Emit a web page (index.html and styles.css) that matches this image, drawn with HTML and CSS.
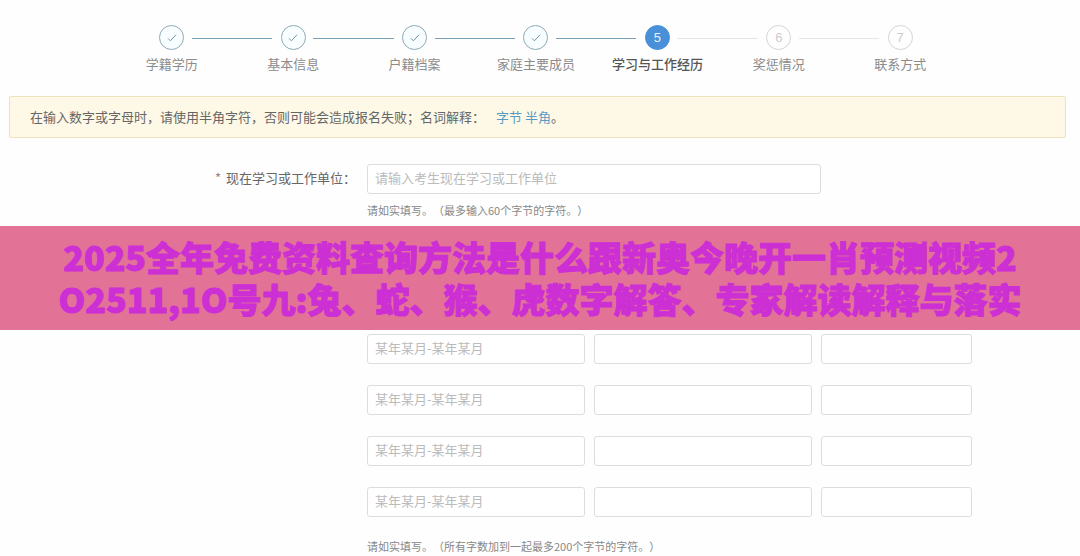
FILE: index.html
```html
<!DOCTYPE html>
<html lang="zh-CN">
<head>
    <meta charset="UTF-8">
    <meta name="viewport" content="width=device-width, initial-scale=1.0">
    <title>学习与工作经历</title>
    <link rel="stylesheet" href="styles.css">
</head>
<body>
    <div class="section">
        <ol class="steps">
            <li class="step done">
                <span class="circle"><svg viewBox="0 0 12 10" width="10" height="8"><path d="M1 5.5 L4 8.5 L11 1"/></svg></span>
                <span class="step-name">学籍学历</span>
            </li>
            <li class="step done">
                <span class="circle"><svg viewBox="0 0 12 10" width="10" height="8"><path d="M1 5.5 L4 8.5 L11 1"/></svg></span>
                <span class="step-name">基本信息</span>
            </li>
            <li class="step done">
                <span class="circle"><svg viewBox="0 0 12 10" width="10" height="8"><path d="M1 5.5 L4 8.5 L11 1"/></svg></span>
                <span class="step-name">户籍档案</span>
            </li>
            <li class="step done">
                <span class="circle"><svg viewBox="0 0 12 10" width="10" height="8"><path d="M1 5.5 L4 8.5 L11 1"/></svg></span>
                <span class="step-name">家庭主要成员</span>
            </li>
            <li class="step current" aria-current="step">
                <span class="circle">5</span>
                <span class="step-name">学习与工作经历</span>
            </li>
            <li class="step">
                <span class="circle">6</span>
                <span class="step-name">奖惩情况</span>
            </li>
            <li class="step">
                <span class="circle">7</span>
                <span class="step-name">联系方式</span>
            </li>
        </ol>

        <p class="notice">在输入数字或字母时，请使用半角字符，否则可能会造成报名失败；名词解释：<span class="terms"><a href="#">字节</a> <a href="#">半角</a>。</span></p>

        <div class="form-row">
            <label class="form-label" for="unit"><span class="required">*</span> 现在学习或工作单位：</label>
            <div class="form-field">
                <input class="input unit" id="unit" type="text" placeholder="请输入考生现在学习或工作单位">
                <p class="hint">请如实填写。（最多输入60个字节的字符。）</p>
            </div>
        </div>
    </div>

    <h1 class="banner">2025全年免费资料查询方法是什么跟新奥今晚开一肖预测视频2<br>O2511,1O号九:兔、蛇、猴、虎数字解答、专家解读解释与落实</h1>

    <div class="section">
        <div class="form-row">
            <div class="form-field history">
                <div class="history-row">
                    <input class="input" type="text" placeholder="某年某月-某年某月" aria-label="起止时间">
                    <input class="input" type="text" aria-label="单位">
                    <input class="input" type="text" aria-label="职务">
                </div>
                <div class="history-row">
                    <input class="input" type="text" placeholder="某年某月-某年某月" aria-label="起止时间">
                    <input class="input" type="text" aria-label="单位">
                    <input class="input" type="text" aria-label="职务">
                </div>
                <div class="history-row">
                    <input class="input" type="text" placeholder="某年某月-某年某月" aria-label="起止时间">
                    <input class="input" type="text" aria-label="单位">
                    <input class="input" type="text" aria-label="职务">
                </div>
                <div class="history-row">
                    <input class="input" type="text" placeholder="某年某月-某年某月" aria-label="起止时间">
                    <input class="input" type="text" aria-label="单位">
                    <input class="input" type="text" aria-label="职务">
                </div>
                <p class="hint">请如实填写。（所有字数加到一起最多200个字节的字符。）</p>
            </div>
        </div>
    </div>
</body>
</html>
```
FILE: styles.css
```css
* {
    box-sizing: border-box;
}

body {
    margin: 0;
    background-color: #fefefe;
    color: #666;
    font-family: "Noto Sans CJK SC", sans-serif;
    font-size: 13px;
    line-height: 20px;
    text-spacing-trim: space-all;
}

.section {
    padding: 0 14px 0 9px;
}

/* progress steps */
.steps {
    display: flex;
    list-style: none;
    margin: 0;
    padding: 25px 105px 0 102px;
}

.step {
    position: relative;
    flex: 1;
    display: flex;
    flex-direction: column;
    align-items: center;
    gap: 4px;
    color: #8c8c8c;
}

.step:not(:last-child)::after {
    content: "";
    position: absolute;
    top: 13px;
    left: calc(50% + 20px);
    width: calc(100% - 41px);
    height: 1px;
    background-color: #e6e6e6;
}

.step.done::after {
    background-color: #7c9fb8;
}

.circle {
    display: flex;
    justify-content: center;
    align-items: center;
    width: 25px;
    height: 25px;
    border: 1px solid #d5d5d5;
    border-radius: 50%;
    color: #ccc;
    font-family: "Liberation Sans", sans-serif;
}

.circle svg {
    fill: none;
    stroke: #6f8f9f;
    stroke-width: 1.2;
}

.step.done .circle {
    border-color: #8fa9b5;
    background-color: #f8feff;
}

.step.current .circle {
    border-color: #4a90d9;
    background-color: #4a90d9;
    color: #e6f2fc;
}

.step-name {
    white-space: nowrap;
}

.step.current .step-name {
    color: #555;
    font-weight: 500;
}

/* yellow notice */
.notice {
    margin: 22px 0 26px;
    padding: 10px 20px;
    border: 1px solid #ece3bd;
    border-radius: 2px;
    background-color: #fef9e6;
}

.terms {
    margin-left: 11px;
}

.notice a {
    color: #5a9bc4;
    text-decoration: none;
}

/* form */
.form-row {
    display: flex;
    padding-right: 94px;
}

.form-label {
    width: 347px;
    padding-top: 4px;
    text-align: right;
}

.required {
    margin-right: 2px;
    color: #a08080;
}

.form-field {
    flex: 1;
    margin-left: 11px;
}

.form-field.history {
    margin-left: 358px;
}

.input {
    display: block;
    width: 100%;
    min-width: 0;
    height: 30px;
    padding: 0 7px 3px;
    border: 1px solid #ddd;
    border-radius: 3px;
    background-color: #fff;
    color: #666;
    font: inherit;
}

.input::placeholder {
    color: #bbb;
    opacity: 1;
}

.input.unit {
    width: 75%;
}

.hint {
    margin: 8px 0;
    color: #888;
    font-size: 11px;
    line-height: 16px;
}

.history-row {
    display: grid;
    grid-template-columns: 218fr 218fr 151fr;
    gap: 9px;
    margin-bottom: 21px;
}

.history .hint {
    margin: 0;
}

/* title banner */
.banner {
    margin: 0 0 4px;
    padding: 10px 0;
    background-color: #e27396;
    color: #cc2fd3;
    font-size: 34px;
    font-weight: 900;
    line-height: 42px;
    text-align: center;
    -webkit-text-stroke: 1px #cc2fd3;
}
```
